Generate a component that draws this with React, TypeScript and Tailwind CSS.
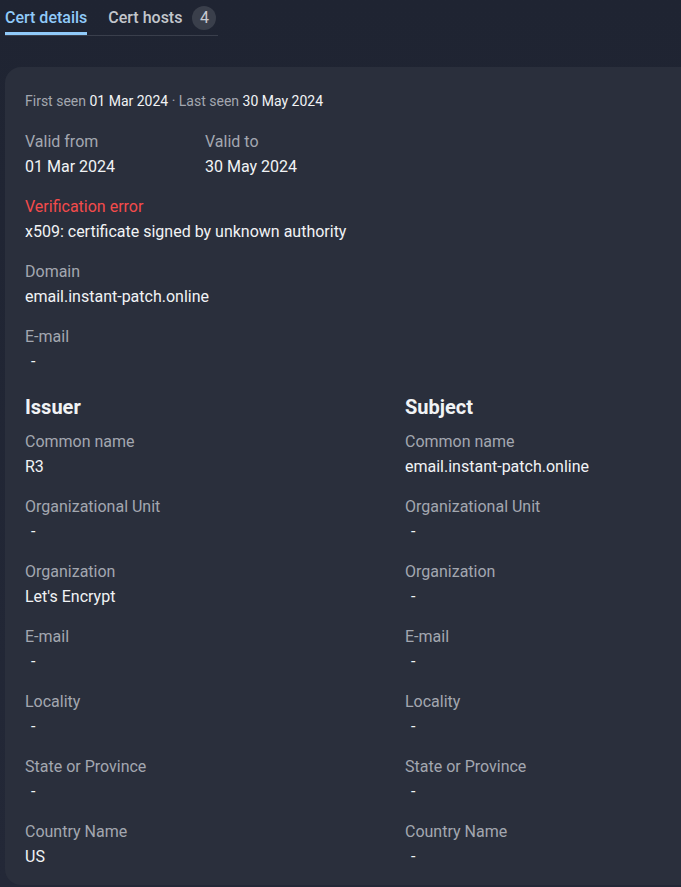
const issuer = [
  ["Common name", "R3"],
  ["Organizational Unit", "-"],
  ["Organization", "Let's Encrypt"],
  ["E-mail", "-"],
  ["Locality", "-"],
  ["State or Province", "-"],
  ["Country Name", "US"],
];

const subject = [
  ["Common name", "email.instant-patch.online"],
  ["Organizational Unit", "-"],
  ["Organization", "-"],
  ["E-mail", "-"],
  ["Locality", "-"],
  ["State or Province", "-"],
  ["Country Name", "-"],
];

function Field({ label, value, className = "" }: { label: string; value: string; className?: string }) {
  return (
    <div className={`flex flex-col ${className}`}>
      <span className="text-base leading-[25px] text-[#a3a7b0]">{label}</span>
      <span className={`text-base leading-[25px] text-[#f1f3f5] ${value === "-" ? "pl-1.5" : ""}`}>{value}</span>
    </div>
  );
}

function Section({ title, rows }: { title: string; rows: string[][] }) {
  return (
    <div className="flex w-[380px] shrink-0 flex-col gap-[15px]">
      <h2 className="text-xl font-bold leading-[25px] text-[#f1f3f5]">{title}</h2>
      <div className="-mt-[6px] flex flex-col gap-[15px]">
        {rows.map(([l, v]) => (
          <Field key={l} label={l} value={v} />
        ))}
      </div>
    </div>
  );
}

export default function App() {
  return (
    <div
      className="h-[887px] w-[681px] overflow-hidden bg-gradient-to-b from-[#1f2432] to-[#232837] pl-[5px] text-[#f1f3f5]"
      style={{ fontFamily: "Roboto, 'Liberation Sans', sans-serif" }}
    >
      <div className="flex w-[213px] items-center border-b border-[#3a3f4c]">
        <div className="flex h-[35px] items-center border-b-[3px] border-[#90caf9] pt-[3px] text-base font-medium text-[#90caf9]">
          Cert details
        </div>
        <div className="ml-[21px] flex items-center gap-[10px] text-base font-medium text-[#c3c6cc]">
          Cert hosts
          <span className="flex h-6 w-6 items-center justify-center rounded-full bg-[#3a3f4b] text-base font-normal text-[#c8cbd1]">
            4
          </span>
        </div>
      </div>

      <div className="mt-[31px] h-[818px] w-[820px] rounded-2xl bg-[#2a2f3c] px-5 pt-[22px]">
        <div className="text-sm leading-[25px] text-[#a3a7b0]">
          First seen <span className="text-[#f1f3f5]">01 Mar 2024</span> · Last seen{" "}
          <span className="text-[#f1f3f5]">30 May 2024</span>
        </div>

        <div className="mt-[15px] flex">
          <Field label="Valid from" value="01 Mar 2024" className="w-[180px]" />
          <Field label="Valid to" value="30 May 2024" />
        </div>

        <div className="mt-[15px] flex flex-col">
          <span className="text-base leading-[25px] text-[#f44b4b]">Verification error</span>
          <span className="text-base leading-[25px] text-[#f1f3f5]">x509: certificate signed by unknown authority</span>
        </div>

        <Field label="Domain" value="email.instant-patch.online" className="mt-[15px]" />
        <Field label="E-mail" value="-" className="mt-[15px]" />

        <div className="mt-[21px] flex">
          <Section title="Issuer" rows={issuer} />
          <Section title="Subject" rows={subject} />
        </div>
      </div>
    </div>
  );
}
